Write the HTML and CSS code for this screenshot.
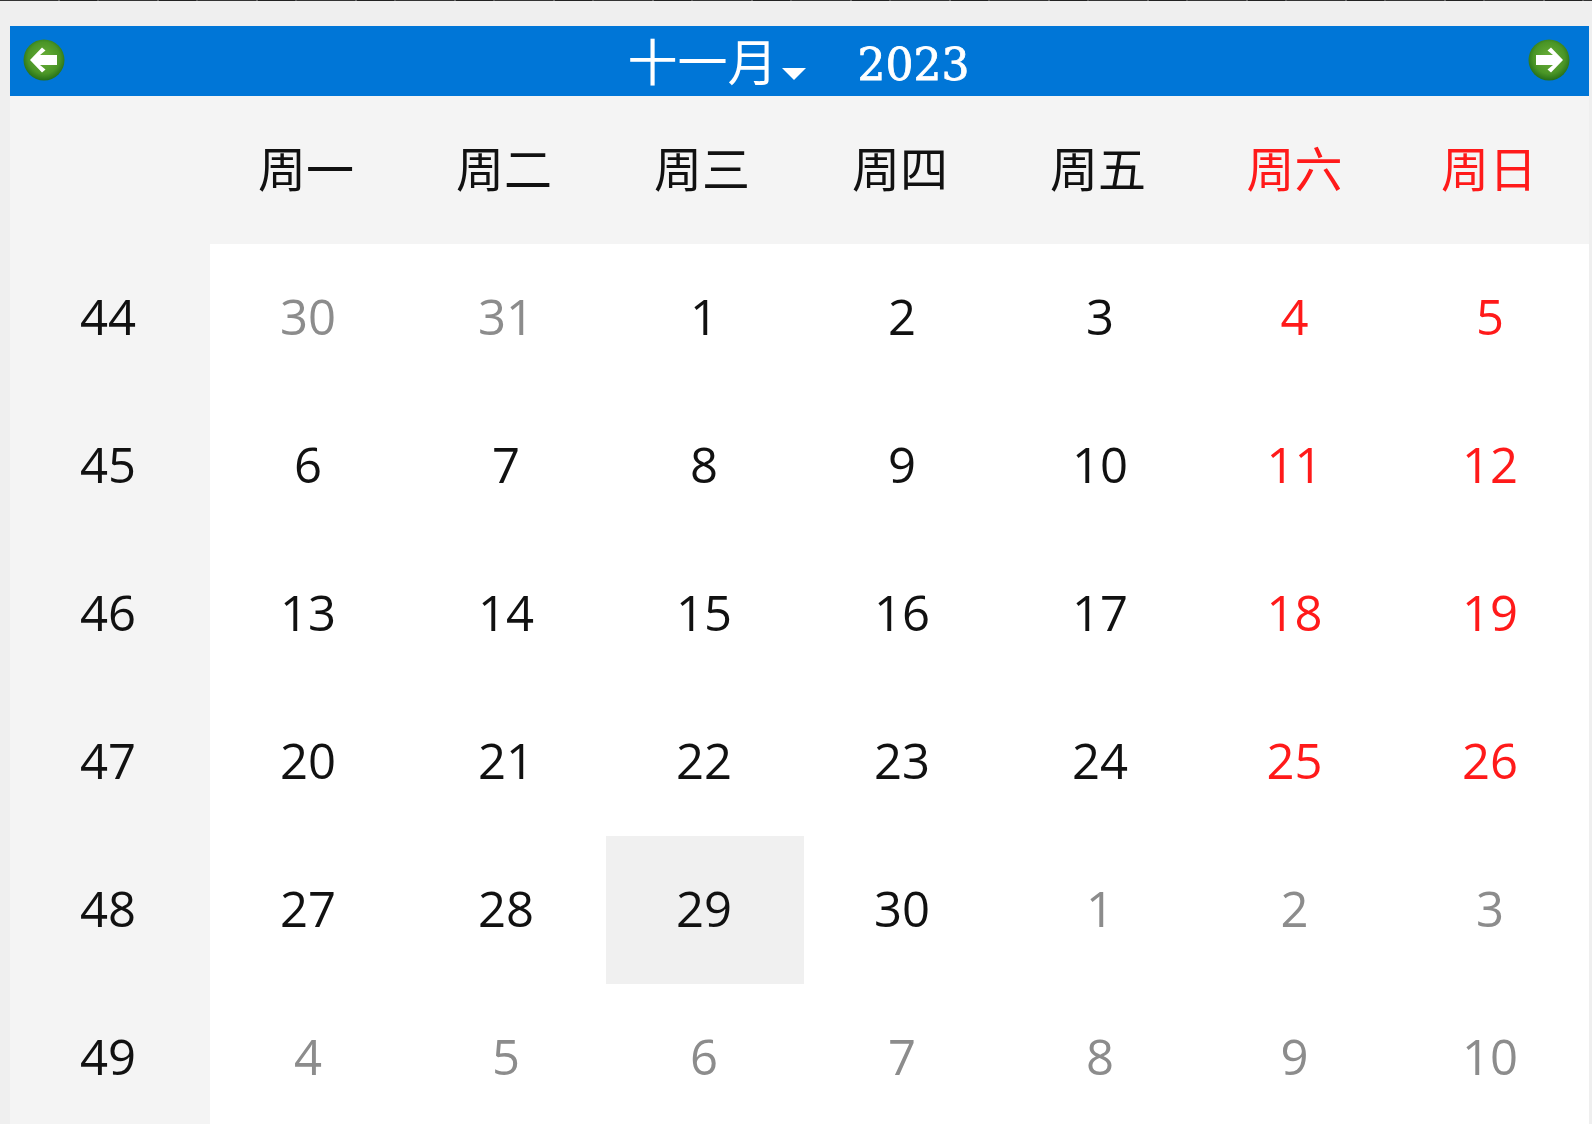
FILE: index.html
```html
<!DOCTYPE html>
<html lang="zh-CN">
<head>
  <meta charset="UTF-8" />
  <title>日历</title>
  <link rel="stylesheet" href="styles.css">
</head>
<body>
  <div class="top-edge"></div>
  <div class="calendar">
    <div class="cal-head">
      <svg class="nav-icon" width="42" height="42" viewBox="0 0 42 42">
        <defs>
          <radialGradient id="ballL" cx="50%" cy="45%" r="55%">
            <stop offset="0" stop-color="#6cb03a"/>
            <stop offset="0.7" stop-color="#4a9526"/>
            <stop offset="1" stop-color="#256f18"/>
          </radialGradient>
        </defs>
        <circle cx="21" cy="21" r="20.5" fill="url(#ballL)"/>
        <path d="M7 21 L19 8.5 L22.5 11.5 L17 16 L34 16 L34 26 L17 26 L22.5 30.5 L19 33.5 Z" fill="#fff"/>
      </svg>
      <div class="cal-title">
        <span class="month">十一月</span><span class="caret"></span>
        <span class="year">2023</span>
      </div>
      <svg class="nav-icon" width="42" height="42" viewBox="0 0 42 42">
        <defs>
          <radialGradient id="ballR" cx="50%" cy="45%" r="55%">
            <stop offset="0" stop-color="#6cb03a"/>
            <stop offset="0.7" stop-color="#4a9526"/>
            <stop offset="1" stop-color="#256f18"/>
          </radialGradient>
        </defs>
        <circle cx="21" cy="21" r="20.5" fill="url(#ballR)"/>
        <path d="M35 21 L23 8.5 L19.5 11.5 L25 16 L8 16 L8 26 L25 26 L19.5 30.5 L23 33.5 Z" fill="#fff"/>
      </svg>
    </div>

    <div class="cal-grid">
      <div class="week-head"></div>
      <div class="week-head">周一</div>
      <div class="week-head">周二</div>
      <div class="week-head">周三</div>
      <div class="week-head">周四</div>
      <div class="week-head">周五</div>
      <div class="week-head red">周六</div>
      <div class="week-head red">周日</div>

      <div class="week-no">44</div>
      <div class="day muted">30</div>
      <div class="day muted">31</div>
      <div class="day">1</div>
      <div class="day">2</div>
      <div class="day">3</div>
      <div class="day red">4</div>
      <div class="day red">5</div>

      <div class="week-no">45</div>
      <div class="day">6</div>
      <div class="day">7</div>
      <div class="day">8</div>
      <div class="day">9</div>
      <div class="day">10</div>
      <div class="day red">11</div>
      <div class="day red">12</div>

      <div class="week-no">46</div>
      <div class="day">13</div>
      <div class="day">14</div>
      <div class="day">15</div>
      <div class="day">16</div>
      <div class="day">17</div>
      <div class="day red">18</div>
      <div class="day red">19</div>

      <div class="week-no">47</div>
      <div class="day">20</div>
      <div class="day">21</div>
      <div class="day">22</div>
      <div class="day">23</div>
      <div class="day">24</div>
      <div class="day red">25</div>
      <div class="day red">26</div>

      <div class="week-no">48</div>
      <div class="day">27</div>
      <div class="day">28</div>
      <div class="day today">29</div>
      <div class="day">30</div>
      <div class="day muted">1</div>
      <div class="day muted">2</div>
      <div class="day muted">3</div>

      <div class="week-no">49</div>
      <div class="day muted">4</div>
      <div class="day muted">5</div>
      <div class="day muted">6</div>
      <div class="day muted">7</div>
      <div class="day muted">8</div>
      <div class="day muted">9</div>
      <div class="day muted">10</div>
    </div>
  </div>
</body>
</html>
```

FILE: styles.css
```css
html, body {
  margin: 0;
  height: 1124px;
  overflow: hidden;
}
body {
  background: #efefef;
  font-family: "Open Sans", "Noto Sans CJK SC", sans-serif;
  color: #111;
}
.top-edge {
  height: 1px;
  background: repeating-linear-gradient(90deg, #333 0 58px, #666 58px 60px, #222 60px 97px, #555 97px 99px);
}
.calendar {
  margin: 25px 3px 0 10px;
  filter: blur(0.7px);
}
.cal-head {
  height: 70px;
  background: #0076d7;
  display: flex;
  align-items: center;
  justify-content: space-between;
  padding: 0 19px 3px 13px;
  box-sizing: border-box;
  color: #fff;
}
.cal-title {
  display: flex;
  align-items: center;
  margin-left: 4px;
}
.month {
  font-family: "Noto Sans CJK SC", sans-serif;
  font-size: 50px;
  line-height: 60px;
  margin-top: -2px;
}
.caret {
  width: 0;
  height: 0;
  border-left: 12px solid transparent;
  border-right: 12px solid transparent;
  border-top: 12px solid #fff;
  margin: 28px 0 0 4px;
}
.year {
  font-family: "DejaVu Serif", serif;
  font-size: 44px;
  line-height: 60px;
  margin: 10px 0 0 52px;
  -webkit-text-stroke: 0.8px #fff;
}
.nav-icon {
  display: block;
}
.cal-grid {
  display: grid;
  grid-template-columns: 200px repeat(5, 198px) 195px 194px;
  grid-template-rows: repeat(7, 148px);
  background: #fff;
}
.week-head, .week-no {
  background: #f4f4f4;
  display: flex;
  align-items: center;
  justify-content: center;
}
.week-head {
  font-family: "Noto Sans CJK SC", sans-serif;
  font-size: 48px;
  padding: 0 6px 8px 0;
}
.week-no {
  font-size: 49px;
  padding: 0 4px 4px 0;
}
.day {
  display: flex;
  align-items: center;
  justify-content: center;
  font-size: 49px;
  padding: 0 2px 4px 0;
}
/* saturday and sunday columns sit a bit further left */
.day:nth-child(8n+7) {
  padding-right: 6px;
}
.day:nth-child(8n) {
  padding-right: 4px;
}
.muted {
  color: #8c8c8c;
}
.red {
  color: #ff1a1a;
}
.today {
  background: #f0f0f0;
}
```
